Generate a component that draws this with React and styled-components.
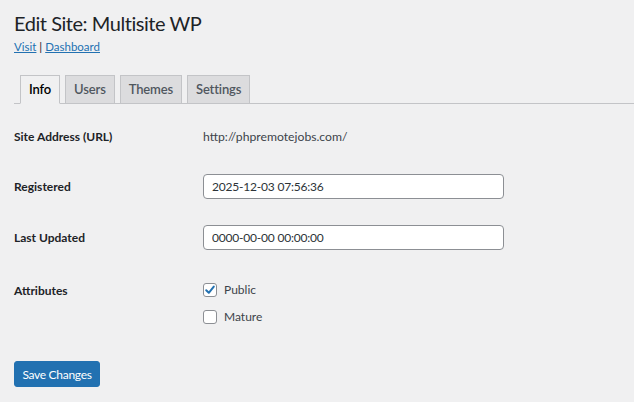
import React from "react";
import styled, { createGlobalStyle } from "styled-components";

const GlobalStyle = createGlobalStyle`
  html, body {
    margin: 0;
    padding: 0;
    background: #f0f0f1;
  }
  body {
    font-family: Lato, "Noto Sans", sans-serif;
    font-size: 12px;
    color: #1d2327;
  }
`;

const Wrap = styled.div`
  padding: 0 0 0 14px;
`;

const Title = styled.h1`
  margin: 0;
  padding-top: 9px;
  font-size: 20px;
  font-weight: 400;
  letter-spacing: -0.45px;
  line-height: 29px;
  color: #1d2327;
`;

const SubLinks = styled.p`
  margin: 0;
  font-size: 11.5px;
  line-height: 18px;
  color: #1d2327;

  a {
    color: #2271b1;
    text-decoration: underline;
  }
`;

const TabBar = styled.nav`
  display: flex;
  gap: 5px;
  margin-top: 19px;
  padding-left: 6px;
  border-bottom: 1px solid #c3c4c7;
`;

const Tab = styled.a`
  display: block;
  box-sizing: border-box;
  height: 29px;
  margin-bottom: -1px;
  padding: 0 8px;
  border: 1px solid #c3c4c7;
  border-bottom-color: ${(p) => (p.$active ? "#f0f0f1" : "#c3c4c7")};
  background: ${(p) => (p.$active ? "#f0f0f1" : "#dcdcde")};
  color: ${(p) => (p.$active ? "#000" : "#50575e")};
  font-size: 13px;
  font-weight: 600;
  letter-spacing: -0.15px;
  line-height: 27px;
  text-decoration: none;
`;

const Form = styled.div`
  display: flex;
  flex-direction: column;
  padding-top: 24px;
`;

const Row = styled.div`
  display: flex;
  align-items: ${(p) => (p.$top ? "flex-start" : "center")};
  margin-top: ${(p) => p.$gap || 0}px;
`;

const Label = styled.div`
  width: 189px;
  flex: none;
  font-weight: 700;
  font-size: 12px;
  line-height: 18px;
  color: #1d2327;
  padding-top: ${(p) => (p.$top ? 1 : 0)}px;
`;

const Value = styled.div`
  font-size: 12.2px;
  line-height: 18px;
  color: #3c434a;
`;

const Input = styled.input`
  box-sizing: border-box;
  width: 301px;
  height: 25px;
  padding: 0 8px;
  border: 1px solid #8c8f94;
  border-radius: 4px;
  background: #fff;
  font-family: inherit;
  font-size: 12px;
  letter-spacing: -0.2px;
  color: #2c3338;
  outline: none;
`;

const Checks = styled.div`
  display: flex;
  flex-direction: column;
  gap: 9px;
`;

const CheckLine = styled.label`
  display: flex;
  align-items: center;
  gap: 7px;
  font-size: 12px;
  line-height: 18px;
  color: #3c434a;
`;

const Box = styled.span`
  box-sizing: border-box;
  width: 14px;
  height: 14px;
  border: 1px solid #8c8f94;
  border-radius: 3px;
  background: #fff;
  display: flex;
  align-items: center;
  justify-content: center;
`;

const SaveButton = styled.button`
  box-sizing: border-box;
  margin-top: 35px;
  width: 86px;
  height: 26px;
  padding: 0;
  border: 1px solid #2271b1;
  border-radius: 3px;
  background: #2271b1;
  color: #fff;
  font-family: inherit;
  font-size: 12px;
  letter-spacing: -0.3px;
  cursor: pointer;
`;

const Checkbox = ({ checked, children }) => (
  <CheckLine>
    <Box>
      {checked && (
        <svg width="12" height="12" viewBox="0 0 12 12">
          <path
            d="M2.2 6.2 L4.8 8.8 L9.8 2.6"
            fill="none"
            stroke="#2271b1"
            strokeWidth="2"
            strokeLinecap="round"
            strokeLinejoin="round"
          />
        </svg>
      )}
    </Box>
    {children}
  </CheckLine>
);

export default function App() {
  return (
    <Wrap>
      <GlobalStyle />
      <Title>Edit Site: Multisite WP</Title>
      <SubLinks>
        <a href="#">Visit</a> | <a href="#">Dashboard</a>
      </SubLinks>
      <TabBar>
        <Tab $active href="#">Info</Tab>
        <Tab href="#">Users</Tab>
        <Tab href="#">Themes</Tab>
        <Tab href="#">Settings</Tab>
      </TabBar>
      <Form>
        <Row>
          <Label>Site Address (URL)</Label>
          <Value>http://phpremotejobs.com/</Value>
        </Row>
        <Row $gap={28}>
          <Label>Registered</Label>
          <Input defaultValue="2025-12-03 07:56:36" />
        </Row>
        <Row $gap={26}>
          <Label>Last Updated</Label>
          <Input defaultValue="0000-00-00 00:00:00" />
        </Row>
        <Row $top $gap={31}>
          <Label $top>Attributes</Label>
          <Checks>
            <Checkbox checked>Public</Checkbox>
            <Checkbox>Mature</Checkbox>
          </Checks>
        </Row>
      </Form>
      <SaveButton>Save Changes</SaveButton>
    </Wrap>
  );
}
